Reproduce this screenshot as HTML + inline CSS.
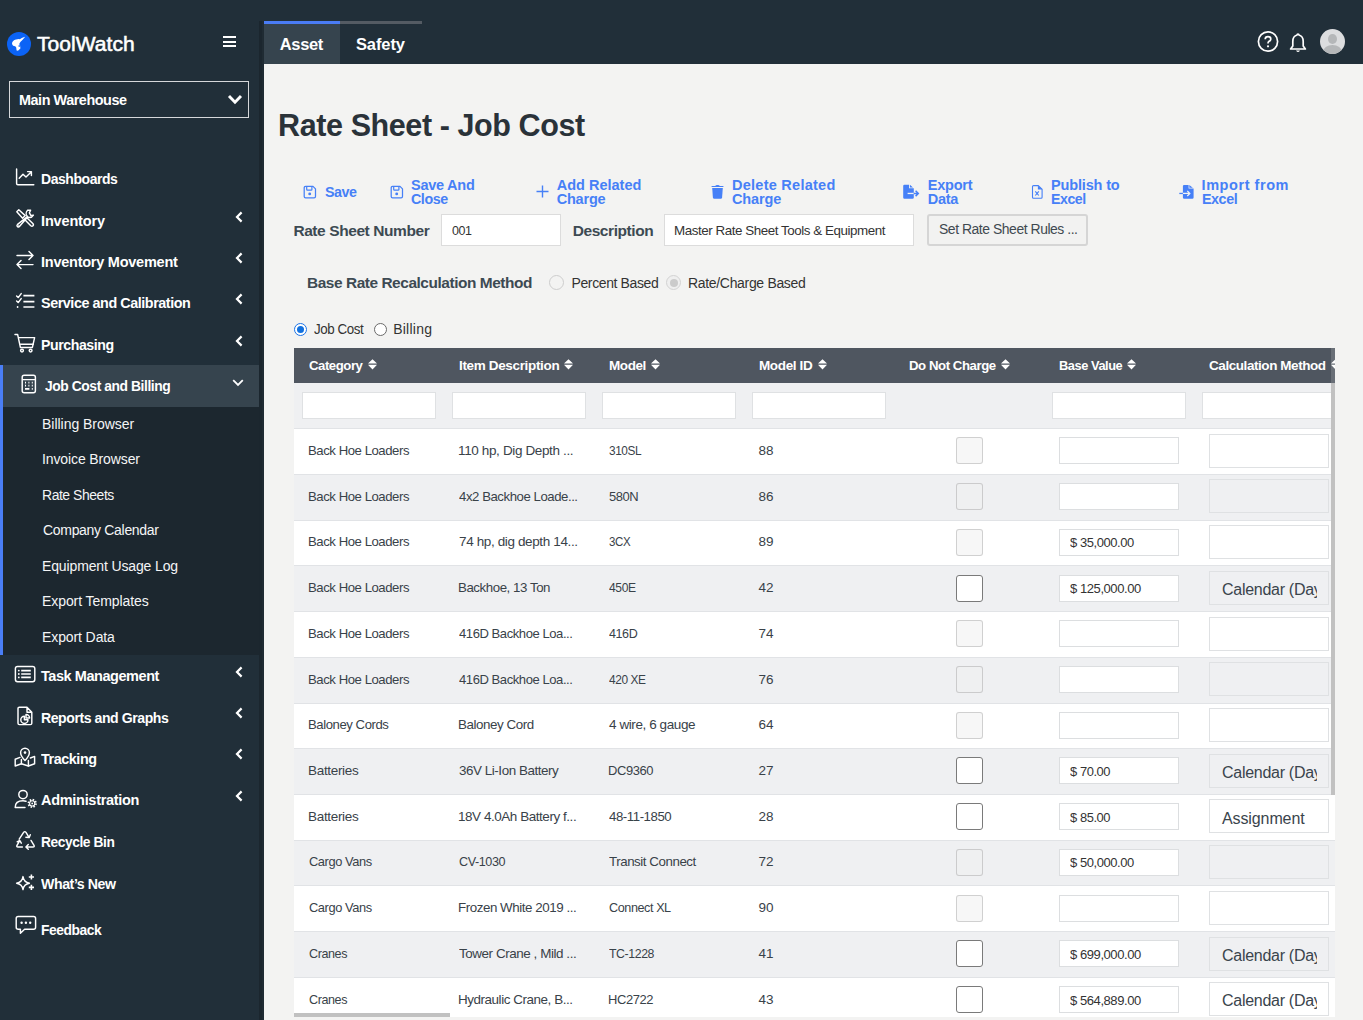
<!DOCTYPE html><html><head><meta charset="utf-8"><title>Rate Sheet - Job Cost</title><style>
*{box-sizing:border-box;margin:0;padding:0}
html,body{width:1363px;height:1020px;overflow:hidden;background:#f3f3f2;font-family:"Liberation Sans",sans-serif}
.a{position:absolute;white-space:nowrap}
.t{position:absolute;white-space:nowrap}
svg.a{overflow:visible}
</style></head><body>
<div class="a" style="left:0;top:0;width:1363px;height:64px;background:#212f39"></div>
<div class="a" style="left:0;top:0;width:259px;height:1020px;background:#212f39"></div>
<div class="a" style="left:259px;top:21px;width:3px;height:999px;background:#1b262e"></div><div class="a" style="left:262px;top:21px;width:2px;height:999px;background:#1f2b33"></div>
<div class="a" style="left:7px;top:32px;width:24px;height:24px;border-radius:50%;background:#0b63f6"></div>
<svg class="a" style="left:7px;top:32px" width="24" height="24" viewBox="0 0 24 24"><path d="M5 11.2 Q5.4 8.6 9 7.6 L11.8 6.9 L12.8 7.3 L14.8 6 L17.9 4.7 L17.6 5.6 L15.4 8 L13.6 9.8 L12.4 11.4 Q12.9 12 12.2 12.6 Q13.4 13.2 13.2 14.6 L13.4 16.4 L11 18.8 L9.6 18.6 L9.2 15.6 L8.2 14.2 Q5.2 14 5 11.2 Z" fill="#fff"/><ellipse cx="12.2" cy="14" rx="0.7" ry="1" fill="#0b63f6"/></svg>
<div class="t" style="left:37.00px;top:30.92px;font-size:21px;font-weight:normal;color:#fff;line-height:26px;letter-spacing:0.053px;-webkit-text-stroke:0.55px #fff">ToolWatch</div>
<div class="a" style="left:222.5px;top:36px;width:13px;height:2px;background:#fff"></div>
<div class="a" style="left:222.5px;top:40.5px;width:13px;height:2px;background:#fff"></div>
<div class="a" style="left:222.5px;top:45px;width:13px;height:2px;background:#fff"></div>
<div class="a" style="left:9px;top:81px;width:240px;height:37px;border:1.5px solid #d6d8da"></div>
<div class="t" style="left:18.60px;top:90.78px;font-size:14.5px;font-weight:bold;color:#fff;line-height:18px;letter-spacing:-0.450px;transform:scaleX(0.9921);transform-origin:0.00px 0">Main Warehouse</div>
<svg class="a" style="left:227px;top:94px" width="16" height="12" viewBox="0 0 16 12"><path d="M2 2 L8 8.2 L14 2" stroke="#fff" stroke-width="2.9" fill="none"/></svg>
<div class="a" style="left:0;top:365px;width:259px;height:42px;background:#36444e"></div>
<div class="a" style="left:0;top:407px;width:259px;height:248px;background:#1c272f"></div>
<div class="a" style="left:0;top:365px;width:3.2px;height:290px;background:#4a7ef6"></div>
<div class="t" style="left:41.00px;top:170.38px;font-size:14.5px;font-weight:bold;color:#fff;line-height:18px;letter-spacing:-0.450px;transform:scaleX(0.9638);transform-origin:0.00px 0">Dashboards</div>
<div class="t" style="left:41.00px;top:211.98px;font-size:14.5px;font-weight:bold;color:#fff;line-height:18px;letter-spacing:-0.150px">Inventory</div>
<svg class="a" style="left:234px;top:210.7px" width="10" height="12" viewBox="0 0 10 12"><path d="M7.6 1.4 L3 6 L7.6 10.6" stroke="#fff" stroke-width="2.2" fill="none"/></svg>
<div class="t" style="left:41.00px;top:252.98px;font-size:14.5px;font-weight:bold;color:#fff;line-height:18px;letter-spacing:-0.245px">Inventory Movement</div>
<svg class="a" style="left:234px;top:251.7px" width="10" height="12" viewBox="0 0 10 12"><path d="M7.6 1.4 L3 6 L7.6 10.6" stroke="#fff" stroke-width="2.2" fill="none"/></svg>
<div class="t" style="left:41.00px;top:294.28px;font-size:14.5px;font-weight:bold;color:#fff;line-height:18px;letter-spacing:-0.450px;transform:scaleX(0.9906);transform-origin:0.00px 0">Service and Calibration</div>
<svg class="a" style="left:234px;top:293.0px" width="10" height="12" viewBox="0 0 10 12"><path d="M7.6 1.4 L3 6 L7.6 10.6" stroke="#fff" stroke-width="2.2" fill="none"/></svg>
<div class="t" style="left:41.00px;top:336.38px;font-size:14.5px;font-weight:bold;color:#fff;line-height:18px;letter-spacing:-0.450px;transform:scaleX(0.9763);transform-origin:0.00px 0">Purchasing</div>
<svg class="a" style="left:234px;top:335.1px" width="10" height="12" viewBox="0 0 10 12"><path d="M7.6 1.4 L3 6 L7.6 10.6" stroke="#fff" stroke-width="2.2" fill="none"/></svg>
<div class="t" style="left:41.00px;top:666.78px;font-size:14.5px;font-weight:bold;color:#fff;line-height:18px;letter-spacing:-0.443px">Task Management</div>
<svg class="a" style="left:234px;top:665.5px" width="10" height="12" viewBox="0 0 10 12"><path d="M7.6 1.4 L3 6 L7.6 10.6" stroke="#fff" stroke-width="2.2" fill="none"/></svg>
<div class="t" style="left:41.00px;top:708.58px;font-size:14.5px;font-weight:bold;color:#fff;line-height:18px;letter-spacing:-0.450px;transform:scaleX(0.9698);transform-origin:0.00px 0">Reports and Graphs</div>
<svg class="a" style="left:234px;top:707.3px" width="10" height="12" viewBox="0 0 10 12"><path d="M7.6 1.4 L3 6 L7.6 10.6" stroke="#fff" stroke-width="2.2" fill="none"/></svg>
<div class="t" style="left:41.00px;top:749.58px;font-size:14.5px;font-weight:bold;color:#fff;line-height:18px;letter-spacing:-0.450px;transform:scaleX(0.9923);transform-origin:0.00px 0">Tracking</div>
<svg class="a" style="left:234px;top:748.3px" width="10" height="12" viewBox="0 0 10 12"><path d="M7.6 1.4 L3 6 L7.6 10.6" stroke="#fff" stroke-width="2.2" fill="none"/></svg>
<div class="t" style="left:41.00px;top:791.28px;font-size:14.5px;font-weight:bold;color:#fff;line-height:18px;letter-spacing:-0.296px">Administration</div>
<svg class="a" style="left:234px;top:790.0px" width="10" height="12" viewBox="0 0 10 12"><path d="M7.6 1.4 L3 6 L7.6 10.6" stroke="#fff" stroke-width="2.2" fill="none"/></svg>
<div class="t" style="left:41.00px;top:832.68px;font-size:14.5px;font-weight:bold;color:#fff;line-height:18px;letter-spacing:-0.450px;transform:scaleX(0.9499);transform-origin:0.00px 0">Recycle Bin</div>
<div class="t" style="left:41.00px;top:874.78px;font-size:14.5px;font-weight:bold;color:#fff;line-height:18px;letter-spacing:-0.450px;transform:scaleX(0.9780);transform-origin:0.00px 0">What’s New</div>
<div class="t" style="left:41.00px;top:921.48px;font-size:14.5px;font-weight:bold;color:#fff;line-height:18px;letter-spacing:-0.450px;transform:scaleX(0.9540);transform-origin:0.00px 0">Feedback</div>
<div class="t" style="left:44.50px;top:377.38px;font-size:14.5px;font-weight:bold;color:#fff;line-height:18px;letter-spacing:-0.450px;transform:scaleX(0.9552);transform-origin:0.00px 0">Job Cost and Billing</div>
<svg class="a" style="left:231px;top:378px" width="14" height="10" viewBox="0 0 14 10"><path d="M2.2 2.2 L7 7 L11.8 2.2" stroke="#fff" stroke-width="1.8" fill="none"/></svg>
<div class="t" style="left:42.00px;top:415.15px;font-size:14px;font-weight:normal;color:#f4f5f6;line-height:18px;letter-spacing:-0.030px">Billing Browser</div>
<div class="t" style="left:42.00px;top:450.15px;font-size:14px;font-weight:normal;color:#f4f5f6;line-height:18px;letter-spacing:-0.116px">Invoice Browser</div>
<div class="t" style="left:42.00px;top:486.15px;font-size:14px;font-weight:normal;color:#f4f5f6;line-height:18px;letter-spacing:-0.450px;transform:scaleX(0.9965);transform-origin:1.00px 0">Rate Sheets</div>
<div class="t" style="left:43.00px;top:521.15px;font-size:14px;font-weight:normal;color:#f4f5f6;line-height:18px;letter-spacing:-0.311px">Company Calendar</div>
<div class="t" style="left:42.00px;top:556.85px;font-size:14px;font-weight:normal;color:#f4f5f6;line-height:18px;letter-spacing:-0.136px">Equipment Usage Log</div>
<div class="t" style="left:42.00px;top:592.15px;font-size:14px;font-weight:normal;color:#f4f5f6;line-height:18px;letter-spacing:-0.077px">Export Templates</div>
<div class="t" style="left:42.00px;top:627.85px;font-size:14px;font-weight:normal;color:#f4f5f6;line-height:18px;letter-spacing:-0.104px">Export Data</div>
<svg class="a" style="left:15px;top:168px" width="20" height="18" viewBox="0 0 20 18"><path d="M1.6 1 V15.6 Q1.6 16.8 2.8 16.8 H18.8" stroke="#fff" stroke-width="1.45" fill="none" stroke-linecap="round" stroke-linejoin="round"/><path d="M4.2 10.2 L8 6.2 L11 9 L16.2 4 M12.6 3.6 H16.4 V7.4" stroke="#fff" stroke-width="1.45" fill="none" stroke-linecap="round" stroke-linejoin="round"/></svg>
<svg class="a" style="left:15px;top:208px" width="20" height="20" viewBox="0 0 20 20"><path d="M1.8 3.8 L3.8 1.8 L10.2 7.6 L7.6 10.2 Z" stroke="#fff" stroke-width="1.45" fill="none" stroke-linecap="round" stroke-linejoin="round"/><path d="M9.6 11.4 L15.8 17.8 Q17 18.8 18 17.8 Q19 16.8 17.8 15.6 L11.6 9.4" stroke="#fff" stroke-width="1.45" fill="none" stroke-linecap="round" stroke-linejoin="round"/><path d="M12.6 2.2 A4.6 4.6 0 0 0 12.4 8.6 L2.6 16.4 Q1.4 17.8 2.6 18.6 Q3.6 19.4 4.6 18.2 L12.6 9 A4.6 4.6 0 0 0 18.4 7.2 L15.8 7.4 L14.4 4.8 L15.6 2.2 Z" stroke="#fff" stroke-width="1.45" fill="none" stroke-linecap="round" stroke-linejoin="round"/><circle cx="3.6" cy="17.2" r="0.5" fill="#fff"/></svg>
<svg class="a" style="left:15px;top:249px" width="20" height="21" viewBox="0 0 20 21"><path d="M2 6.4 H18 M14 2.4 L18 6.4 L14 10.4 M18 15.6 H2 M6 11.6 L2 15.6 L6 19.6" stroke="#fff" stroke-width="1.45" fill="none" stroke-linecap="round" stroke-linejoin="round"/></svg>
<svg class="a" style="left:15px;top:292px" width="21" height="17" viewBox="0 0 21 17"><path d="M1.6 4 L3.2 5.6 L6.2 1.6 M1.6 9 L3.2 10.6 L6.2 6.6" stroke="#fff" stroke-width="1.45" fill="none" stroke-linecap="round" stroke-linejoin="round"/><circle cx="2.6" cy="15" r="0.9" fill="#fff"/><path d="M8.4 3.6 H19.4 M8.4 9.6 H19.4 M8.4 15 H19.4" stroke="#fff" stroke-width="1.6" fill="none"/></svg>
<svg class="a" style="left:14px;top:333px" width="22" height="20" viewBox="0 0 22 20"><path d="M1 1.4 H3.6 L6.4 14.4 H18.4 L20.6 4.6 H4.6" stroke="#fff" stroke-width="1.45" fill="none" stroke-linecap="round" stroke-linejoin="round"/><path d="M6.6 11.2 H19.2" stroke="#fff" stroke-width="1.45" fill="none" stroke-linecap="round" stroke-linejoin="round"/><circle cx="8" cy="17.6" r="1.4" stroke="#fff" stroke-width="1.45" fill="none" stroke-linecap="round" stroke-linejoin="round"/><circle cx="16.6" cy="17.6" r="1.4" stroke="#fff" stroke-width="1.45" fill="none" stroke-linecap="round" stroke-linejoin="round"/></svg>
<svg class="a" style="left:21px;top:374px" width="16" height="20" viewBox="0 0 16 20"><rect x="1.2" y="1.2" width="13.2" height="17.6" rx="2" stroke="#fff" stroke-width="1.45" fill="none" stroke-linecap="round" stroke-linejoin="round"/><path d="M2 5.6 H13.6" stroke="#fff" stroke-width="1.45" fill="none" stroke-linecap="round" stroke-linejoin="round"/><path d="M4 8.6 H5 M7.4 8.6 H8.4 M10.8 8.6 H11.8 M4 11.6 H5 M7.4 11.6 H8.4 M10.8 11.6 H11.8 M4 14.8 H8.4 M10.8 14.8 H11.8" stroke="#fff" stroke-width="1.8" fill="none"/></svg>
<svg class="a" style="left:14px;top:665px" width="22" height="18" viewBox="0 0 22 18"><rect x="1.4" y="1.4" width="19.4" height="15.4" rx="2.2" stroke="#fff" stroke-width="1.45" fill="none" stroke-linecap="round" stroke-linejoin="round"/><path d="M7.2 5.6 H16.8 M7.2 9 H16.8 M7.2 12.4 H16.8" stroke="#fff" stroke-width="1.6" fill="none"/><circle cx="4.8" cy="5.6" r="0.9" fill="#fff"/><circle cx="4.8" cy="9" r="0.9" fill="#fff"/><circle cx="4.8" cy="12.4" r="0.9" fill="#fff"/></svg>
<svg class="a" style="left:17px;top:706px" width="17" height="20" viewBox="0 0 17 20"><path d="M2.4 1.2 H10 L14.8 6.2 V17.2 Q14.8 18.6 13.4 18.6 H2.4 Q1 18.6 1 17.2 V2.6 Q1 1.2 2.4 1.2 Z M10 1.2 V6.2 H14.8" stroke="#fff" stroke-width="1.45" fill="none" stroke-linecap="round" stroke-linejoin="round"/><path d="M7.4 10.2 A3.6 3.6 0 1 0 11 13.8 H7.4 Z" stroke="#fff" stroke-width="1.45" fill="none" stroke-linecap="round" stroke-linejoin="round"/><path d="M9 8.4 A3.6 3.6 0 0 1 12.6 12 H9 Z" stroke="#fff" stroke-width="1.45" fill="none" stroke-linecap="round" stroke-linejoin="round"/></svg>
<svg class="a" style="left:14px;top:747px" width="22" height="20" viewBox="0 0 22 20"><path d="M6 10.4 L1.2 12.2 V19 L7.4 16.8 L14.4 19 L20.6 16.8 V9.4 L16.4 11" stroke="#fff" stroke-width="1.45" fill="none" stroke-linecap="round" stroke-linejoin="round"/><path d="M7.4 12.4 V16.8 M14.4 13.4 V19" stroke="#fff" stroke-width="1.45" fill="none" stroke-linecap="round" stroke-linejoin="round"/><path d="M11 13.6 Q6.6 9 6.6 5.6 A4.4 4.4 0 0 1 15.4 5.6 Q15.4 9 11 13.6 Z" stroke="#fff" stroke-width="1.45" fill="none" stroke-linecap="round" stroke-linejoin="round"/><circle cx="11" cy="5.6" r="1.3" fill="#fff"/></svg>
<svg class="a" style="left:14px;top:789px" width="24" height="20" viewBox="0 0 24 20"><circle cx="9" cy="5.6" r="4.2" stroke="#fff" stroke-width="1.45" fill="none" stroke-linecap="round" stroke-linejoin="round"/><path d="M1.2 18.4 Q1.2 11.8 9 11.8 Q10.6 11.8 12 12.2 M1.2 18.4 H11" stroke="#fff" stroke-width="1.45" fill="none" stroke-linecap="round" stroke-linejoin="round"/><circle cx="18.2" cy="14.4" r="3.7" stroke="#fff" stroke-width="1.9" fill="none" stroke-dasharray="1.5 1.4"/><circle cx="18.2" cy="14.4" r="2.6" stroke="#fff" stroke-width="1.1" fill="none"/><circle cx="18.2" cy="14.4" r="0.9" fill="#fff"/></svg>
<svg class="a" style="left:15px;top:830px" width="21" height="20" viewBox="0 0 21 20"><path d="M4.2 9.2 L8.6 2.4 Q9.8 0.8 11 2.4 L14 7.4 M10.9 7.3 L14.1 7.6 L15.3 4.7" stroke="#fff" stroke-width="1.45" fill="none" stroke-linecap="round" stroke-linejoin="round"/><path d="M16 10.4 L19 15.4 Q19.8 17 18 17 H11 M13.3 14.6 L10.9 17 L13.3 19.3" stroke="#fff" stroke-width="1.45" fill="none" stroke-linecap="round" stroke-linejoin="round"/><path d="M7.4 17 H3 Q1.2 17 2 15.4 L4.6 10.9 M2.1 11.8 L4.8 10.5 L6.3 13.2" stroke="#fff" stroke-width="1.45" fill="none" stroke-linecap="round" stroke-linejoin="round"/></svg>
<svg class="a" style="left:15px;top:873px" width="21" height="18" viewBox="0 0 21 18"><path d="M8 3.6 Q8.8 9.2 14.4 10.2 Q8.8 11 8 16.6 Q7.2 11 1.6 10.2 Q7.2 9.2 8 3.6 Z" stroke="#fff" stroke-width="1.45" fill="none" stroke-linecap="round" stroke-linejoin="round"/><path d="M16.4 1.4 V6.6 M13.8 4 H19 M16.4 11.8 V17 M13.8 14.4 H19" stroke="#fff" stroke-width="1.6" fill="none"/></svg>
<svg class="a" style="left:15px;top:915px" width="22" height="20" viewBox="0 0 22 20"><path d="M3.2 1.4 H18.6 Q20.6 1.4 20.6 3.4 V12.2 Q20.6 14.2 18.6 14.2 H9.6 L5.4 18.2 V14.2 H3.2 Q1.2 14.2 1.2 12.2 V3.4 Q1.2 1.4 3.2 1.4 Z" stroke="#fff" stroke-width="1.45" fill="none" stroke-linecap="round" stroke-linejoin="round"/><circle cx="6.6" cy="7.8" r="1.2" fill="#fff"/><circle cx="10.9" cy="7.8" r="1.2" fill="#fff"/><circle cx="15.2" cy="7.8" r="1.2" fill="#fff"/></svg>
<div class="a" style="left:264px;top:21px;width:76px;height:43px;background:#36444e"></div>
<div class="a" style="left:264px;top:21px;width:76px;height:3px;background:#4a7cf5"></div>
<div class="a" style="left:340px;top:21px;width:82px;height:3px;background:#545b63"></div>
<div class="t" style="left:279.80px;top:33.68px;font-size:16.5px;font-weight:bold;color:#fff;line-height:21px;letter-spacing:-0.361px">Asset</div>
<div class="t" style="left:355.90px;top:33.68px;font-size:16.5px;font-weight:bold;color:#fff;line-height:21px;letter-spacing:-0.090px">Safety</div>
<svg class="a" style="left:1256px;top:30px" width="24" height="24" viewBox="0 0 24 24"><circle cx="12" cy="11.5" r="9.6" stroke="#fff" stroke-width="1.7" fill="none"/><path d="M9.2 9.2 Q9.2 6.6 12 6.6 Q14.8 6.6 14.8 9 Q14.8 10.6 12.9 11.4 Q12 11.9 12 13.4" stroke="#fff" stroke-width="1.7" fill="none"/><circle cx="12" cy="16.3" r="1.1" fill="#fff"/></svg>
<svg class="a" style="left:1288px;top:32px" width="20" height="22" viewBox="0 0 20 22"><path d="M10 2 Q10.9 2 10.9 3 Q15.2 4 15.2 9.5 L15.2 14 L17.4 17 L2.6 17 L4.8 14 L4.8 9.5 Q4.8 4 9.1 3 Q9.1 2 10 2 Z" stroke="#fff" stroke-width="1.7" fill="none" stroke-linejoin="round"/><path d="M8 18.5 Q10 21.5 12 18.5 Z" fill="#fff"/></svg>
<div class="a" style="left:1320px;top:29px;width:25px;height:25px;border-radius:50%;background:#dcdddf;overflow:hidden"><div class="a" style="left:8px;top:5px;width:9px;height:10px;border-radius:50%;background:#b5b7b9"></div><div class="a" style="left:3px;top:16px;width:19px;height:14px;border-radius:50%;background:#b5b7b9"></div></div>
<div class="t" style="left:278.00px;top:105.31px;font-size:32px;font-weight:bold;color:#2a3239;line-height:40px;letter-spacing:-0.450px;transform:scaleX(0.9545);transform-origin:2.00px 0">Rate Sheet - Job Cost</div>
<div class="t" style="left:324.80px;top:183.08px;font-size:14.5px;font-weight:bold;color:#4680f7;line-height:18px;letter-spacing:-0.450px;transform:scaleX(0.9861);transform-origin:0.00px 0">Save</div>
<div class="t" style="left:411.00px;top:175.78px;font-size:14.5px;font-weight:bold;color:#4680f7;line-height:18px;letter-spacing:-0.246px">Save And</div>
<div class="t" style="left:411.00px;top:189.78px;font-size:14.5px;font-weight:bold;color:#4680f7;line-height:18px;letter-spacing:-0.450px;transform:scaleX(0.9835);transform-origin:0.00px 0">Close</div>
<div class="t" style="left:556.70px;top:175.78px;font-size:14.5px;font-weight:bold;color:#4680f7;line-height:18px;letter-spacing:0.006px">Add Related</div>
<div class="t" style="left:556.70px;top:189.78px;font-size:14.5px;font-weight:bold;color:#4680f7;line-height:18px;letter-spacing:-0.199px">Charge</div>
<div class="t" style="left:732.00px;top:175.78px;font-size:14.5px;font-weight:bold;color:#4680f7;line-height:18px;letter-spacing:0.256px">Delete Related</div>
<div class="t" style="left:732.00px;top:189.78px;font-size:14.5px;font-weight:bold;color:#4680f7;line-height:18px;letter-spacing:-0.139px">Charge</div>
<div class="t" style="left:927.70px;top:175.78px;font-size:14.5px;font-weight:bold;color:#4680f7;line-height:18px;letter-spacing:-0.199px">Export</div>
<div class="t" style="left:927.70px;top:189.78px;font-size:14.5px;font-weight:bold;color:#4680f7;line-height:18px;letter-spacing:-0.255px">Data</div>
<div class="t" style="left:1051.00px;top:175.78px;font-size:14.5px;font-weight:bold;color:#4680f7;line-height:18px;letter-spacing:-0.158px">Publish to</div>
<div class="t" style="left:1051.00px;top:189.78px;font-size:14.5px;font-weight:bold;color:#4680f7;line-height:18px;letter-spacing:-0.450px;transform:scaleX(0.9754);transform-origin:0.00px 0">Excel</div>
<div class="t" style="left:1201.60px;top:175.78px;font-size:14.5px;font-weight:bold;color:#4680f7;line-height:18px;letter-spacing:0.554px">Import from</div>
<div class="t" style="left:1201.60px;top:189.78px;font-size:14.5px;font-weight:bold;color:#4680f7;line-height:18px;letter-spacing:-0.450px;transform:scaleX(0.9868);transform-origin:0.00px 0">Excel</div>
<svg class="a" style="left:303.3px;top:184.5px" width="14" height="14" viewBox="0 0 14 14"><path d="M2.6 1.4 H10 L12.5 3.9 V11.4 Q12.5 12.8 11.1 12.8 H2.6 Q1.2 12.8 1.2 11.4 V2.8 Q1.2 1.4 2.6 1.4 Z" stroke="#4680f7" stroke-width="1.25" fill="none" stroke-linejoin="round"/><path d="M3.7 1.6 V4.4 Q3.7 5.1 4.4 5.1 H8.2 Q8.9 5.1 8.9 4.4 V1.6" stroke="#4680f7" stroke-width="1.2" fill="none"/><circle cx="6.7" cy="8.9" r="1.45" fill="#4680f7"/></svg>
<svg class="a" style="left:389.6px;top:184.5px" width="14" height="14" viewBox="0 0 14 14"><path d="M2.6 1.4 H10 L12.5 3.9 V11.4 Q12.5 12.8 11.1 12.8 H2.6 Q1.2 12.8 1.2 11.4 V2.8 Q1.2 1.4 2.6 1.4 Z" stroke="#4680f7" stroke-width="1.25" fill="none" stroke-linejoin="round"/><path d="M3.7 1.6 V4.4 Q3.7 5.1 4.4 5.1 H8.2 Q8.9 5.1 8.9 4.4 V1.6" stroke="#4680f7" stroke-width="1.2" fill="none"/><circle cx="6.7" cy="8.9" r="1.45" fill="#4680f7"/></svg>
<svg class="a" style="left:536px;top:185px" width="13" height="13" viewBox="0 0 13 13"><path d="M6.5 0.5 V12.5 M0.5 6.5 H12.5" stroke="#4680f7" stroke-width="1.4"/></svg>
<svg class="a" style="left:711px;top:184px" width="13" height="15" viewBox="0 0 13 15"><path d="M0.6 2 H12.4 V3 H0.6 Z M4.6 1.2 Q6.5 0.6 8.4 1.2 V2 H4.6 Z" fill="#4680f7"/><path d="M1.2 3.9 H11.8 L11.1 13.6 Q10.9 14.8 9.8 14.8 H3.2 Q2.1 14.8 1.9 13.6 Z" fill="#4680f7"/></svg>
<svg class="a" style="left:903px;top:184px" width="17" height="15" viewBox="0 0 17 15"><path d="M1.4 0.7 H6 V4.2 H10.8 V13.6 Q10.8 14.8 9.6 14.8 H1.4 Q0.2 14.8 0.2 13.6 V1.9 Q0.2 0.7 1.4 0.7 Z" fill="#4680f7"/><path d="M6.9 0.7 L10 3.6 H6.9 Z" fill="#4680f7"/><rect x="4.6" y="8.8" width="6.4" height="1.3" fill="#f3f3f2"/><path d="M10.6 9.45 H15.4 M12.6 6.8 L15.3 9.45 L12.6 12.1" stroke="#4680f7" stroke-width="1.5" fill="none"/></svg>
<svg class="a" style="left:1031px;top:184px" width="13" height="15" viewBox="0 0 13 15"><path d="M2.5 1.6 H7.2 L11.1 5.3 V13.3 Q11.1 14.3 10.1 14.3 H2.5 Q1.5 14.3 1.5 13.3 V2.6 Q1.5 1.6 2.5 1.6 Z" stroke="#4680f7" stroke-width="1.1" fill="none"/><path d="M6.9 1.6 L11.1 5.4 H6.9 Z" fill="#4680f7"/><path d="M4.3 7.3 L7.8 11.5 M7.8 7.3 L4.3 11.5" stroke="#4680f7" stroke-width="1.15"/></svg>
<svg class="a" style="left:1179px;top:184px" width="16" height="15" viewBox="0 0 16 15"><path d="M5.1 0.9 H9.6 V4.4 H14.6 V13.6 Q14.6 14.8 13.4 14.8 H5.1 Q3.9 14.8 3.9 13.6 V2.1 Q3.9 0.9 5.1 0.9 Z" fill="#4680f7"/><path d="M10.3 0.9 L13.8 3.8 H10.3 Z" fill="#4680f7"/><path d="M0.3 9.45 H4.2" stroke="#4680f7" stroke-width="1.3"/><path d="M3.9 9.45 H10.6 M8.3 6.9 L10.8 9.45 L8.3 12" stroke="#f3f3f2" stroke-width="1.3" fill="none"/></svg>
<div class="t" style="left:293.40px;top:220.73px;font-size:15.5px;font-weight:bold;color:#3d4a53;line-height:19px;letter-spacing:-0.416px">Rate Sheet Number</div>
<div class="a" style="left:441px;top:214px;width:120px;height:31.5px;background:#fff;border:1px solid #dcdcdc"></div>
<div class="t" style="left:451.80px;top:222.12px;font-size:13.5px;font-weight:normal;color:#333;line-height:17px;letter-spacing:-0.450px;transform:scaleX(0.9235);transform-origin:0.00px 0">001</div>
<div class="t" style="left:572.70px;top:220.73px;font-size:15.5px;font-weight:bold;color:#3d4a53;line-height:19px;letter-spacing:-0.420px">Description</div>
<div class="a" style="left:664px;top:214px;width:250px;height:31.5px;background:#fff;border:1px solid #dcdcdc"></div>
<div class="t" style="left:674.00px;top:222.12px;font-size:13.5px;font-weight:normal;color:#333;line-height:17px;letter-spacing:-0.450px;transform:scaleX(0.9915);transform-origin:1.00px 0">Master Rate Sheet Tools &amp; Equipment</div>
<div class="a" style="left:927px;top:214px;width:161px;height:31.5px;background:#f2f2f1;border:2px solid #d5d5d5;border-radius:3px"></div>
<div class="t" style="left:938.50px;top:220.05px;font-size:14px;font-weight:normal;color:#3f4950;line-height:18px;letter-spacing:-0.450px;transform:scaleX(0.9939);transform-origin:0.00px 0">Set Rate Sheet Rules ...</div>
<div class="t" style="left:306.50px;top:273.13px;font-size:15.5px;font-weight:bold;color:#3d4a53;line-height:19px;letter-spacing:-0.450px;transform:scaleX(0.9954);transform-origin:1.00px 0">Base Rate Recalculation Method</div>
<div class="a" style="left:549.4px;top:275px;width:15px;height:15px;border-radius:50%;border:1px solid #cdcdcd;background:transparent"></div>
<div class="t" style="left:571.50px;top:274.15px;font-size:14px;font-weight:normal;color:#333;line-height:18px;letter-spacing:-0.379px">Percent Based</div>
<div class="a" style="left:666.4px;top:275px;width:15px;height:15px;border-radius:50%;border:1px solid #d3d3d3;background:#efefef"><div class="a" style="left:2.5px;top:2.5px;width:8px;height:8px;border-radius:50%;background:#cbcbcb"></div></div>
<div class="t" style="left:688.00px;top:274.15px;font-size:14px;font-weight:normal;color:#333;line-height:18px;letter-spacing:-0.324px">Rate/Charge Based</div>
<div class="a" style="left:294px;top:323px;width:13px;height:13px;border-radius:50%;border:1px solid #1a73e8;background:#fff"><div class="a" style="left:1.75px;top:1.75px;width:7.5px;height:7.5px;border-radius:50%;background:#1170de"></div></div>
<div class="t" style="left:314.00px;top:320.15px;font-size:14px;font-weight:normal;color:#333;line-height:18px;letter-spacing:-0.450px;transform:scaleX(0.9539);transform-origin:0.00px 0">Job Cost</div>
<div class="a" style="left:374px;top:323px;width:13px;height:13px;border-radius:50%;border:1px solid #6a6a6a;background:#fff"></div>
<div class="t" style="left:393.20px;top:320.15px;font-size:14px;font-weight:normal;color:#333;line-height:18px;letter-spacing:0.239px">Billing</div>
<div class="a" style="left:294px;top:348px;width:1041px;height:35px;background:#4f5660"></div>
<div class="a" style="left:294px;top:383px;width:1041px;height:45px;background:#eff0f2"></div>
<div class="t" style="left:309.00px;top:356.72px;font-size:13.5px;font-weight:bold;color:#fff;line-height:17px;letter-spacing:-0.450px;transform:scaleX(0.9739);transform-origin:0.00px 0">Category</div>
<svg class="a" style="left:367.5px;top:359.3px" width="9" height="11" viewBox="0 0 9 11"><path d="M4.5 0.3 L8.8 4.3 V4.6 H0.2 V4.3 Z M0.2 5.8 H8.8 V6.1 L4.5 10.6 L0.2 6.1 Z" fill="#fff"/></svg>
<div class="t" style="left:459.00px;top:356.72px;font-size:13.5px;font-weight:bold;color:#fff;line-height:17px;letter-spacing:-0.342px">Item Description</div>
<svg class="a" style="left:564.0px;top:359.3px" width="9" height="11" viewBox="0 0 9 11"><path d="M4.5 0.3 L8.8 4.3 V4.6 H0.2 V4.3 Z M0.2 5.8 H8.8 V6.1 L4.5 10.6 L0.2 6.1 Z" fill="#fff"/></svg>
<div class="t" style="left:609.00px;top:356.72px;font-size:13.5px;font-weight:bold;color:#fff;line-height:17px;letter-spacing:-0.412px">Model</div>
<svg class="a" style="left:651.0px;top:359.3px" width="9" height="11" viewBox="0 0 9 11"><path d="M4.5 0.3 L8.8 4.3 V4.6 H0.2 V4.3 Z M0.2 5.8 H8.8 V6.1 L4.5 10.6 L0.2 6.1 Z" fill="#fff"/></svg>
<div class="t" style="left:759.00px;top:356.72px;font-size:13.5px;font-weight:bold;color:#fff;line-height:17px;letter-spacing:-0.371px">Model ID</div>
<svg class="a" style="left:818.0px;top:359.3px" width="9" height="11" viewBox="0 0 9 11"><path d="M4.5 0.3 L8.8 4.3 V4.6 H0.2 V4.3 Z M0.2 5.8 H8.8 V6.1 L4.5 10.6 L0.2 6.1 Z" fill="#fff"/></svg>
<div class="t" style="left:909.00px;top:356.72px;font-size:13.5px;font-weight:bold;color:#fff;line-height:17px;letter-spacing:-0.450px;transform:scaleX(0.9778);transform-origin:0.00px 0">Do Not Charge</div>
<svg class="a" style="left:1001.0px;top:359.3px" width="9" height="11" viewBox="0 0 9 11"><path d="M4.5 0.3 L8.8 4.3 V4.6 H0.2 V4.3 Z M0.2 5.8 H8.8 V6.1 L4.5 10.6 L0.2 6.1 Z" fill="#fff"/></svg>
<div class="t" style="left:1059.00px;top:356.72px;font-size:13.5px;font-weight:bold;color:#fff;line-height:17px;letter-spacing:-0.450px;transform:scaleX(0.9478);transform-origin:0.00px 0">Base Value</div>
<svg class="a" style="left:1127.0px;top:359.3px" width="9" height="11" viewBox="0 0 9 11"><path d="M4.5 0.3 L8.8 4.3 V4.6 H0.2 V4.3 Z M0.2 5.8 H8.8 V6.1 L4.5 10.6 L0.2 6.1 Z" fill="#fff"/></svg>
<div class="t" style="left:1209.00px;top:356.72px;font-size:13.5px;font-weight:bold;color:#fff;line-height:17px;letter-spacing:-0.438px">Calculation Method</div>
<svg class="a" style="left:1331.0px;top:359.3px" width="9" height="11" viewBox="0 0 9 11"><path d="M4.5 0.3 L8.8 4.3 V4.6 H0.2 V4.3 Z M0.2 5.8 H8.8 V6.1 L4.5 10.6 L0.2 6.1 Z" fill="#fff"/></svg>
<div class="a" style="left:302px;top:392px;height:27px;width:134px;background:#fff;border:1px solid #dfe1e3"></div>
<div class="a" style="left:452px;top:392px;height:27px;width:134px;background:#fff;border:1px solid #dfe1e3"></div>
<div class="a" style="left:602px;top:392px;height:27px;width:134px;background:#fff;border:1px solid #dfe1e3"></div>
<div class="a" style="left:752px;top:392px;height:27px;width:134px;background:#fff;border:1px solid #dfe1e3"></div>
<div class="a" style="left:1052px;top:392px;height:27px;width:134px;background:#fff;border:1px solid #dfe1e3"></div>
<div class="a" style="left:1202px;top:392px;height:27px;width:134px;background:#fff;border:1px solid #dfe1e3"></div>
<div class="a" style="left:294px;width:1041px;top:428px;height:46px;background:#ffffff;border-top:1px solid #e1e3e6"></div>
<div class="t" style="left:308.00px;top:441.98px;font-size:13.5px;font-weight:normal;color:#394249;line-height:17px;letter-spacing:-0.450px;transform:scaleX(0.9723);transform-origin:1.00px 0">Back Hoe Loaders</div>
<div class="t" style="left:458.00px;top:441.98px;font-size:13.5px;font-weight:normal;color:#394249;line-height:17px;letter-spacing:-0.364px">110 hp, Dig Depth ...</div>
<div class="t" style="left:609.00px;top:441.98px;font-size:13.5px;font-weight:normal;color:#394249;line-height:17px;letter-spacing:-0.450px;transform:scaleX(0.8747);transform-origin:0.00px 0">310SL</div>
<div class="t" style="left:758.60px;top:441.98px;font-size:13.5px;font-weight:normal;color:#394249;line-height:17px;letter-spacing:-0.200px">88</div>
<div class="a" style="left:955.5px;width:27px;height:27px;border-radius:3px;top:437.4px;background:rgba(239,239,239,0.5);border:1px solid rgba(118,118,118,0.3)"></div>
<div class="a" style="left:1059px;width:120px;height:27px;background:#fff;border:1px solid #dcdee0;top:437.4px"></div>
<div class="a" style="left:1209px;width:120px;height:34px;border:1px solid #dfe1e3;top:433.7px;background:#fff"></div>
<div class="a" style="left:294px;width:1041px;top:474px;height:46px;background:#eff0f2;border-top:1px solid #e1e3e6"></div>
<div class="t" style="left:308.00px;top:487.70px;font-size:13.5px;font-weight:normal;color:#394249;line-height:17px;letter-spacing:-0.450px;transform:scaleX(0.9723);transform-origin:1.00px 0">Back Hoe Loaders</div>
<div class="t" style="left:459.00px;top:487.70px;font-size:13.5px;font-weight:normal;color:#394249;line-height:17px;letter-spacing:-0.450px;transform:scaleX(0.9753);transform-origin:0.00px 0">4x2 Backhoe Loade...</div>
<div class="t" style="left:609.00px;top:487.70px;font-size:13.5px;font-weight:normal;color:#394249;line-height:17px;letter-spacing:-0.450px;transform:scaleX(0.9611);transform-origin:0.00px 0">580N</div>
<div class="t" style="left:758.60px;top:487.70px;font-size:13.5px;font-weight:normal;color:#394249;line-height:17px;letter-spacing:-0.200px">86</div>
<div class="a" style="left:955.5px;width:27px;height:27px;border-radius:3px;top:483.1px;background:rgba(239,239,239,0.5);border:1px solid rgba(118,118,118,0.3)"></div>
<div class="a" style="left:1059px;width:120px;height:27px;background:#fff;border:1px solid #dcdee0;top:483.1px"></div>
<div class="a" style="left:1209px;width:120px;height:34px;border:1px solid #dfe1e3;top:479.4px;background:#eff0f2"></div>
<div class="a" style="left:294px;width:1041px;top:520px;height:45px;background:#ffffff;border-top:1px solid #e1e3e6"></div>
<div class="t" style="left:308.00px;top:533.42px;font-size:13.5px;font-weight:normal;color:#394249;line-height:17px;letter-spacing:-0.450px;transform:scaleX(0.9723);transform-origin:1.00px 0">Back Hoe Loaders</div>
<div class="t" style="left:459.00px;top:533.42px;font-size:13.5px;font-weight:normal;color:#394249;line-height:17px;letter-spacing:-0.372px">74 hp, dig depth 14...</div>
<div class="t" style="left:609.00px;top:533.42px;font-size:13.5px;font-weight:normal;color:#394249;line-height:17px;letter-spacing:-0.450px;transform:scaleX(0.8518);transform-origin:0.00px 0">3CX</div>
<div class="t" style="left:758.60px;top:533.42px;font-size:13.5px;font-weight:normal;color:#394249;line-height:17px;letter-spacing:-0.200px">89</div>
<div class="a" style="left:955.5px;width:27px;height:27px;border-radius:3px;top:528.8px;background:rgba(239,239,239,0.5);border:1px solid rgba(118,118,118,0.3)"></div>
<div class="a" style="left:1059px;width:120px;height:27px;background:#fff;border:1px solid #dcdee0;top:528.8px"></div>
<div class="t" style="left:1070.30px;top:534.42px;font-size:13.5px;font-weight:normal;color:#333;line-height:17px;letter-spacing:-0.450px;transform:scaleX(0.9607);transform-origin:0.00px 0">$ 35,000.00</div>
<div class="a" style="left:1209px;width:120px;height:34px;border:1px solid #dfe1e3;top:525.1px;background:#fff"></div>
<div class="a" style="left:294px;width:1041px;top:565px;height:46px;background:#eff0f2;border-top:1px solid #e1e3e6"></div>
<div class="t" style="left:308.00px;top:579.14px;font-size:13.5px;font-weight:normal;color:#394249;line-height:17px;letter-spacing:-0.450px;transform:scaleX(0.9723);transform-origin:1.00px 0">Back Hoe Loaders</div>
<div class="t" style="left:458.00px;top:579.14px;font-size:13.5px;font-weight:normal;color:#394249;line-height:17px;letter-spacing:-0.450px;transform:scaleX(0.9832);transform-origin:1.00px 0">Backhoe, 13 Ton</div>
<div class="t" style="left:609.00px;top:579.14px;font-size:13.5px;font-weight:normal;color:#394249;line-height:17px;letter-spacing:-0.450px;transform:scaleX(0.8948);transform-origin:0.00px 0">450E</div>
<div class="t" style="left:758.60px;top:579.14px;font-size:13.5px;font-weight:normal;color:#394249;line-height:17px;letter-spacing:-0.200px">42</div>
<div class="a" style="left:955.5px;width:27px;height:27px;border-radius:3px;top:574.5px;background:#fff;border:1px solid #7a7a7a"></div>
<div class="a" style="left:1059px;width:120px;height:27px;background:#fff;border:1px solid #dcdee0;top:574.5px"></div>
<div class="t" style="left:1070.30px;top:580.14px;font-size:13.5px;font-weight:normal;color:#333;line-height:17px;letter-spacing:-0.450px;transform:scaleX(0.9637);transform-origin:0.00px 0">$ 125,000.00</div>
<div class="a" style="left:1209px;width:120px;height:34px;border:1px solid #dfe1e3;top:570.8px;background:#eff0f2"></div>
<div class="a" style="left:1216px;top:576.0px;width:100.6px;height:24px;overflow:hidden">
<div class="t" style="left:6.00px;top:3.96px;font-size:16px;font-weight:normal;color:#3a444c;line-height:20px;letter-spacing:-0.280px">Calendar (Day</div>
</div>
<div class="a" style="left:294px;width:1041px;top:611px;height:46px;background:#ffffff;border-top:1px solid #e1e3e6"></div>
<div class="t" style="left:308.00px;top:624.86px;font-size:13.5px;font-weight:normal;color:#394249;line-height:17px;letter-spacing:-0.450px;transform:scaleX(0.9723);transform-origin:1.00px 0">Back Hoe Loaders</div>
<div class="t" style="left:459.00px;top:624.86px;font-size:13.5px;font-weight:normal;color:#394249;line-height:17px;letter-spacing:-0.450px;transform:scaleX(0.9656);transform-origin:0.00px 0">416D Backhoe Loa...</div>
<div class="t" style="left:609.00px;top:624.86px;font-size:13.5px;font-weight:normal;color:#394249;line-height:17px;letter-spacing:-0.450px;transform:scaleX(0.9270);transform-origin:0.00px 0">416D</div>
<div class="t" style="left:758.60px;top:624.86px;font-size:13.5px;font-weight:normal;color:#394249;line-height:17px;letter-spacing:-0.200px">74</div>
<div class="a" style="left:955.5px;width:27px;height:27px;border-radius:3px;top:620.2px;background:rgba(239,239,239,0.5);border:1px solid rgba(118,118,118,0.3)"></div>
<div class="a" style="left:1059px;width:120px;height:27px;background:#fff;border:1px solid #dcdee0;top:620.2px"></div>
<div class="a" style="left:1209px;width:120px;height:34px;border:1px solid #dfe1e3;top:616.5px;background:#fff"></div>
<div class="a" style="left:294px;width:1041px;top:657px;height:46px;background:#eff0f2;border-top:1px solid #e1e3e6"></div>
<div class="t" style="left:308.00px;top:670.58px;font-size:13.5px;font-weight:normal;color:#394249;line-height:17px;letter-spacing:-0.450px;transform:scaleX(0.9723);transform-origin:1.00px 0">Back Hoe Loaders</div>
<div class="t" style="left:459.00px;top:670.58px;font-size:13.5px;font-weight:normal;color:#394249;line-height:17px;letter-spacing:-0.450px;transform:scaleX(0.9656);transform-origin:0.00px 0">416D Backhoe Loa...</div>
<div class="t" style="left:609.00px;top:670.58px;font-size:13.5px;font-weight:normal;color:#394249;line-height:17px;letter-spacing:-0.450px;transform:scaleX(0.8803);transform-origin:0.00px 0">420 XE</div>
<div class="t" style="left:758.60px;top:670.58px;font-size:13.5px;font-weight:normal;color:#394249;line-height:17px;letter-spacing:-0.200px">76</div>
<div class="a" style="left:955.5px;width:27px;height:27px;border-radius:3px;top:666.0px;background:rgba(239,239,239,0.5);border:1px solid rgba(118,118,118,0.3)"></div>
<div class="a" style="left:1059px;width:120px;height:27px;background:#fff;border:1px solid #dcdee0;top:666.0px"></div>
<div class="a" style="left:1209px;width:120px;height:34px;border:1px solid #dfe1e3;top:662.3px;background:#eff0f2"></div>
<div class="a" style="left:294px;width:1041px;top:703px;height:45px;background:#ffffff;border-top:1px solid #e1e3e6"></div>
<div class="t" style="left:308.00px;top:716.30px;font-size:13.5px;font-weight:normal;color:#394249;line-height:17px;letter-spacing:-0.450px;transform:scaleX(0.9721);transform-origin:1.00px 0">Baloney Cords</div>
<div class="t" style="left:458.00px;top:716.30px;font-size:13.5px;font-weight:normal;color:#394249;line-height:17px;letter-spacing:-0.450px;transform:scaleX(0.9915);transform-origin:1.00px 0">Baloney Cord</div>
<div class="t" style="left:609.00px;top:716.30px;font-size:13.5px;font-weight:normal;color:#394249;line-height:17px;letter-spacing:-0.415px">4 wire, 6 gauge</div>
<div class="t" style="left:758.60px;top:716.30px;font-size:13.5px;font-weight:normal;color:#394249;line-height:17px;letter-spacing:-0.200px">64</div>
<div class="a" style="left:955.5px;width:27px;height:27px;border-radius:3px;top:711.7px;background:rgba(239,239,239,0.5);border:1px solid rgba(118,118,118,0.3)"></div>
<div class="a" style="left:1059px;width:120px;height:27px;background:#fff;border:1px solid #dcdee0;top:711.7px"></div>
<div class="a" style="left:1209px;width:120px;height:34px;border:1px solid #dfe1e3;top:708.0px;background:#fff"></div>
<div class="a" style="left:294px;width:1041px;top:748px;height:46px;background:#eff0f2;border-top:1px solid #e1e3e6"></div>
<div class="t" style="left:308.00px;top:762.02px;font-size:13.5px;font-weight:normal;color:#394249;line-height:17px;letter-spacing:-0.316px">Batteries</div>
<div class="t" style="left:459.00px;top:762.02px;font-size:13.5px;font-weight:normal;color:#394249;line-height:17px;letter-spacing:-0.450px;transform:scaleX(0.9934);transform-origin:0.00px 0">36V Li-Ion Battery</div>
<div class="t" style="left:608.00px;top:762.02px;font-size:13.5px;font-weight:normal;color:#394249;line-height:17px;letter-spacing:-0.450px;transform:scaleX(0.9591);transform-origin:1.00px 0">DC9360</div>
<div class="t" style="left:758.60px;top:762.02px;font-size:13.5px;font-weight:normal;color:#394249;line-height:17px;letter-spacing:-0.200px">27</div>
<div class="a" style="left:955.5px;width:27px;height:27px;border-radius:3px;top:757.4px;background:#fff;border:1px solid #7a7a7a"></div>
<div class="a" style="left:1059px;width:120px;height:27px;background:#fff;border:1px solid #dcdee0;top:757.4px"></div>
<div class="t" style="left:1070.30px;top:763.02px;font-size:13.5px;font-weight:normal;color:#333;line-height:17px;letter-spacing:-0.450px;transform:scaleX(0.9562);transform-origin:0.00px 0">$ 70.00</div>
<div class="a" style="left:1209px;width:120px;height:34px;border:1px solid #dfe1e3;top:753.7px;background:#eff0f2"></div>
<div class="a" style="left:1216px;top:758.9px;width:100.6px;height:24px;overflow:hidden">
<div class="t" style="left:6.00px;top:3.96px;font-size:16px;font-weight:normal;color:#3a444c;line-height:20px;letter-spacing:-0.280px">Calendar (Day</div>
</div>
<div class="a" style="left:294px;width:1041px;top:794px;height:46px;background:#ffffff;border-top:1px solid #e1e3e6"></div>
<div class="t" style="left:308.00px;top:807.74px;font-size:13.5px;font-weight:normal;color:#394249;line-height:17px;letter-spacing:-0.316px">Batteries</div>
<div class="t" style="left:458.00px;top:807.74px;font-size:13.5px;font-weight:normal;color:#394249;line-height:17px;letter-spacing:-0.450px;transform:scaleX(0.9981);transform-origin:1.00px 0">18V 4.0Ah Battery f...</div>
<div class="t" style="left:609.00px;top:807.74px;font-size:13.5px;font-weight:normal;color:#394249;line-height:17px;letter-spacing:-0.450px;transform:scaleX(0.9796);transform-origin:0.00px 0">48-11-1850</div>
<div class="t" style="left:758.60px;top:807.74px;font-size:13.5px;font-weight:normal;color:#394249;line-height:17px;letter-spacing:-0.200px">28</div>
<div class="a" style="left:955.5px;width:27px;height:27px;border-radius:3px;top:803.1px;background:#fff;border:1px solid #7a7a7a"></div>
<div class="a" style="left:1059px;width:120px;height:27px;background:#fff;border:1px solid #dcdee0;top:803.1px"></div>
<div class="t" style="left:1070.30px;top:808.74px;font-size:13.5px;font-weight:normal;color:#333;line-height:17px;letter-spacing:-0.450px;transform:scaleX(0.9562);transform-origin:0.00px 0">$ 85.00</div>
<div class="a" style="left:1209px;width:120px;height:34px;border:1px solid #dfe1e3;top:799.4px;background:#fff"></div>
<div class="t" style="left:1222.00px;top:808.58px;font-size:16px;font-weight:normal;color:#3a444c;line-height:20px;letter-spacing:-0.105px">Assignment</div>
<div class="a" style="left:294px;width:1041px;top:840px;height:45px;background:#eff0f2;border-top:1px solid #e1e3e6"></div>
<div class="t" style="left:309.00px;top:853.46px;font-size:13.5px;font-weight:normal;color:#394249;line-height:17px;letter-spacing:-0.450px;transform:scaleX(0.9520);transform-origin:0.00px 0">Cargo Vans</div>
<div class="t" style="left:459.00px;top:853.46px;font-size:13.5px;font-weight:normal;color:#394249;line-height:17px;letter-spacing:-0.450px;transform:scaleX(0.9325);transform-origin:0.00px 0">CV-1030</div>
<div class="t" style="left:609.00px;top:853.46px;font-size:13.5px;font-weight:normal;color:#394249;line-height:17px;letter-spacing:-0.450px;transform:scaleX(0.9860);transform-origin:0.00px 0">Transit Connect</div>
<div class="t" style="left:758.60px;top:853.46px;font-size:13.5px;font-weight:normal;color:#394249;line-height:17px;letter-spacing:-0.200px">72</div>
<div class="a" style="left:955.5px;width:27px;height:27px;border-radius:3px;top:848.8px;background:rgba(239,239,239,0.5);border:1px solid rgba(118,118,118,0.3)"></div>
<div class="a" style="left:1059px;width:120px;height:27px;background:#fff;border:1px solid #dcdee0;top:848.8px"></div>
<div class="t" style="left:1070.30px;top:854.46px;font-size:13.5px;font-weight:normal;color:#333;line-height:17px;letter-spacing:-0.450px;transform:scaleX(0.9607);transform-origin:0.00px 0">$ 50,000.00</div>
<div class="a" style="left:1209px;width:120px;height:34px;border:1px solid #dfe1e3;top:845.1px;background:#eff0f2"></div>
<div class="a" style="left:294px;width:1041px;top:885px;height:46px;background:#ffffff;border-top:1px solid #e1e3e6"></div>
<div class="t" style="left:309.00px;top:899.18px;font-size:13.5px;font-weight:normal;color:#394249;line-height:17px;letter-spacing:-0.450px;transform:scaleX(0.9520);transform-origin:0.00px 0">Cargo Vans</div>
<div class="t" style="left:458.00px;top:899.18px;font-size:13.5px;font-weight:normal;color:#394249;line-height:17px;letter-spacing:-0.450px;transform:scaleX(0.9881);transform-origin:1.00px 0">Frozen White 2019 ...</div>
<div class="t" style="left:609.00px;top:899.18px;font-size:13.5px;font-weight:normal;color:#394249;line-height:17px;letter-spacing:-0.450px;transform:scaleX(0.9345);transform-origin:0.00px 0">Connect XL</div>
<div class="t" style="left:758.60px;top:899.18px;font-size:13.5px;font-weight:normal;color:#394249;line-height:17px;letter-spacing:-0.200px">90</div>
<div class="a" style="left:955.5px;width:27px;height:27px;border-radius:3px;top:894.6px;background:rgba(239,239,239,0.5);border:1px solid rgba(118,118,118,0.3)"></div>
<div class="a" style="left:1059px;width:120px;height:27px;background:#fff;border:1px solid #dcdee0;top:894.6px"></div>
<div class="a" style="left:1209px;width:120px;height:34px;border:1px solid #dfe1e3;top:890.9px;background:#fff"></div>
<div class="a" style="left:294px;width:1041px;top:931px;height:46px;background:#eff0f2;border-top:1px solid #e1e3e6"></div>
<div class="t" style="left:309.00px;top:944.90px;font-size:13.5px;font-weight:normal;color:#394249;line-height:17px;letter-spacing:-0.450px;transform:scaleX(0.9321);transform-origin:0.00px 0">Cranes</div>
<div class="t" style="left:459.00px;top:944.90px;font-size:13.5px;font-weight:normal;color:#394249;line-height:17px;letter-spacing:-0.450px;transform:scaleX(0.9963);transform-origin:0.00px 0">Tower Crane , Mild ...</div>
<div class="t" style="left:609.00px;top:944.90px;font-size:13.5px;font-weight:normal;color:#394249;line-height:17px;letter-spacing:-0.450px;transform:scaleX(0.9125);transform-origin:0.00px 0">TC-1228</div>
<div class="t" style="left:758.60px;top:944.90px;font-size:13.5px;font-weight:normal;color:#394249;line-height:17px;letter-spacing:-0.200px">41</div>
<div class="a" style="left:955.5px;width:27px;height:27px;border-radius:3px;top:940.3px;background:#fff;border:1px solid #7a7a7a"></div>
<div class="a" style="left:1059px;width:120px;height:27px;background:#fff;border:1px solid #dcdee0;top:940.3px"></div>
<div class="t" style="left:1070.30px;top:945.90px;font-size:13.5px;font-weight:normal;color:#333;line-height:17px;letter-spacing:-0.450px;transform:scaleX(0.9637);transform-origin:0.00px 0">$ 699,000.00</div>
<div class="a" style="left:1209px;width:120px;height:34px;border:1px solid #dfe1e3;top:936.6px;background:#eff0f2"></div>
<div class="a" style="left:1216px;top:941.8px;width:100.6px;height:24px;overflow:hidden">
<div class="t" style="left:6.00px;top:3.96px;font-size:16px;font-weight:normal;color:#3a444c;line-height:20px;letter-spacing:-0.280px">Calendar (Day</div>
</div>
<div class="a" style="left:294px;width:1041px;top:977px;height:40px;background:#ffffff;border-top:1px solid #e1e3e6"></div>
<div class="t" style="left:309.00px;top:990.62px;font-size:13.5px;font-weight:normal;color:#394249;line-height:17px;letter-spacing:-0.450px;transform:scaleX(0.9321);transform-origin:0.00px 0">Cranes</div>
<div class="t" style="left:458.00px;top:990.62px;font-size:13.5px;font-weight:normal;color:#394249;line-height:17px;letter-spacing:-0.450px;transform:scaleX(0.9948);transform-origin:1.00px 0">Hydraulic Crane, B...</div>
<div class="t" style="left:608.00px;top:990.62px;font-size:13.5px;font-weight:normal;color:#394249;line-height:17px;letter-spacing:-0.450px;transform:scaleX(0.9591);transform-origin:1.00px 0">HC2722</div>
<div class="t" style="left:758.60px;top:990.62px;font-size:13.5px;font-weight:normal;color:#394249;line-height:17px;letter-spacing:-0.200px">43</div>
<div class="a" style="left:955.5px;width:27px;height:27px;border-radius:3px;top:986.0px;background:#fff;border:1px solid #7a7a7a"></div>
<div class="a" style="left:1059px;width:120px;height:27px;background:#fff;border:1px solid #dcdee0;top:986.0px"></div>
<div class="t" style="left:1070.30px;top:991.62px;font-size:13.5px;font-weight:normal;color:#333;line-height:17px;letter-spacing:-0.450px;transform:scaleX(0.9637);transform-origin:0.00px 0">$ 564,889.00</div>
<div class="a" style="left:1209px;width:120px;height:34px;border:1px solid #dfe1e3;top:982.3px;background:#fff"></div>
<div class="a" style="left:1216px;top:987.5px;width:100.6px;height:24px;overflow:hidden">
<div class="t" style="left:6.00px;top:3.96px;font-size:16px;font-weight:normal;color:#3a444c;line-height:20px;letter-spacing:-0.280px">Calendar (Day</div>
</div>
<div class="a" style="left:1331px;top:348px;width:4px;height:35px;background:rgba(255,255,255,0.15)"></div>
<div class="a" style="left:1335px;top:340px;width:28px;height:680px;background:#f3f3f2"></div>
<div class="a" style="left:1331px;top:383px;width:4px;height:412px;background:#c1c1c1"></div>
<div class="a" style="left:294px;top:1013px;width:156px;height:4px;background:#c1c1c1"></div>
<div class="a" style="left:294px;top:1017px;width:1069px;height:3px;background:#f3f3f2"></div>
</body></html>
